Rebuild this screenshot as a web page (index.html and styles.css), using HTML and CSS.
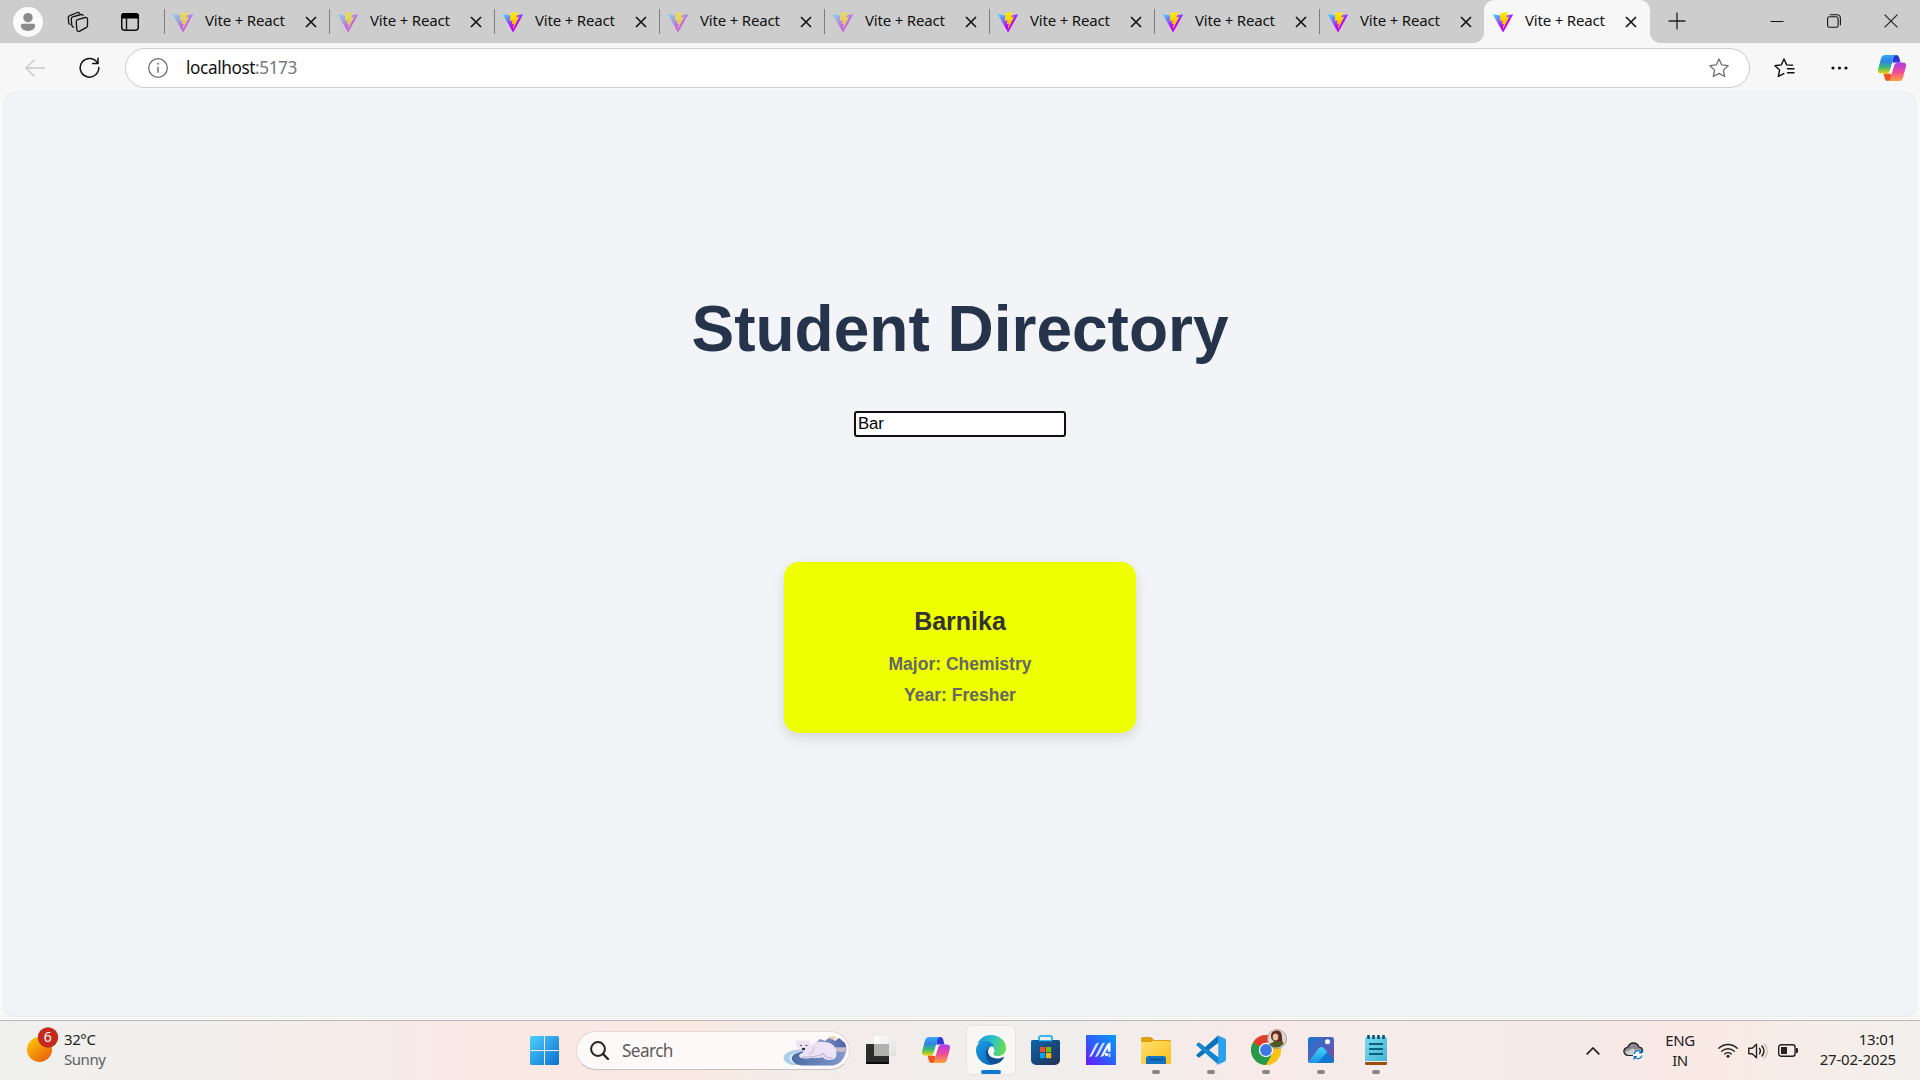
FILE: index.html
```html
<!DOCTYPE html>
<html lang="en">
<head>
<meta charset="utf-8">
<title>Vite + React</title>
<link rel="stylesheet" href="styles.css">
</head>
<body>
<svg class="defs" width="0" height="0" aria-hidden="true">
  <defs>
    <linearGradient id="viteA" x1="-.8%" x2="57.6%" y1="10%" y2="80%"><stop offset="0" stop-color="#41d1ff"/><stop offset=".85" stop-color="#bd00ff"/></linearGradient>
    <linearGradient id="viteB" x1="43.4%" x2="50.3%" y1="2.2%" y2="89%"><stop offset="0" stop-color="#ffea00"/><stop offset=".3" stop-color="#fbdc00"/><stop offset="1" stop-color="#ffb400"/></linearGradient>
    <linearGradient id="copL" x1="0" x2="0" y1="0" y2="1"><stop offset="0" stop-color="#35a8f5"/><stop offset=".35" stop-color="#2f84e8"/><stop offset=".65" stop-color="#35b878"/><stop offset="1" stop-color="#f2d500"/></linearGradient>
    <linearGradient id="copR" x1="0" x2="0" y1="0" y2="1"><stop offset="0" stop-color="#a93cf0"/><stop offset=".5" stop-color="#f2489c"/><stop offset="1" stop-color="#ffa43c"/></linearGradient>
    <linearGradient id="edgeA" x1="0" x2="1" y1=".3" y2=".5"><stop offset="0" stop-color="#1695db"/><stop offset=".5" stop-color="#2fc3c8"/><stop offset="1" stop-color="#6add48"/></linearGradient>
    <linearGradient id="edgeB" x1="0" x2="1" y1="0" y2="1"><stop offset="0" stop-color="#1b9de2"/><stop offset="1" stop-color="#0862b8"/></linearGradient>
    <linearGradient id="winA" gradientUnits="userSpaceOnUse" x1="0" x2="29" y1="0" y2="29"><stop offset="0" stop-color="#4fd0fc"/><stop offset="1" stop-color="#0a6fd0"/></linearGradient>
    <linearGradient id="storeA" x1="0" x2="1" y1="0" y2="1"><stop offset="0" stop-color="#0f63ad"/><stop offset="1" stop-color="#22304f"/></linearGradient>
    <linearGradient id="asusA" x1="0" x2="1" y1="1" y2="0"><stop offset="0" stop-color="#6b16f5"/><stop offset=".5" stop-color="#2a62fb"/><stop offset="1" stop-color="#0a9bff"/></linearGradient>
    <linearGradient id="foldA" x1="0" x2="1" y1="0" y2="1"><stop offset="0" stop-color="#ffdf70"/><stop offset="1" stop-color="#fbbf1c"/></linearGradient>
    <linearGradient id="phoA" x1="0" x2="1" y1="0" y2="1"><stop offset="0" stop-color="#1c75d0"/><stop offset="1" stop-color="#7f4da6"/></linearGradient>
    <linearGradient id="phoB" x1="0" x2="0" y1="0" y2="1"><stop offset="0" stop-color="#45d2fb"/><stop offset="1" stop-color="#1596e8"/></linearGradient>
    <linearGradient id="noteA" x1="0" x2="1" y1="0" y2="1"><stop offset="0" stop-color="#7bdcf0"/><stop offset="1" stop-color="#46b4d2"/></linearGradient>
    <linearGradient id="sunA" x1=".1" x2=".9" y1="0" y2="1"><stop offset="0" stop-color="#fccb09"/><stop offset="1" stop-color="#e8590a"/></linearGradient>
    <linearGradient id="tvA" x1="0" x2="1" y1="0" y2="1"><stop offset="0" stop-color="#ffffff"/><stop offset="1" stop-color="#dedede"/></linearGradient>
    <linearGradient id="skyA" x1="0" x2="1" y1="0" y2="0"><stop offset="0" stop-color="#8fa3d0"/><stop offset="1" stop-color="#4f60a8"/></linearGradient>
    <linearGradient id="waterA" x1="0" x2="1" y1="0" y2="0"><stop offset="0" stop-color="#4a6da3"/><stop offset="1" stop-color="#829ad0"/></linearGradient>
    <symbol id="vite" viewBox="0 0 256 257">
      <path fill="url(#viteA)" d="M255.153 37.938L134.897 252.976c-2.483 4.44-8.862 4.466-11.382.048L.875 37.958c-2.746-4.814 1.371-10.646 6.827-9.67l120.385 21.517a6.537 6.537 0 0 0 2.322-.004l117.867-21.483c5.438-.991 9.574 4.796 6.877 9.62Z"/>
      <path fill="url(#viteB)" d="M185.432.063L96.44 17.501a3.268 3.268 0 0 0-2.634 3.014l-5.474 92.456a3.268 3.268 0 0 0 3.997 3.378l24.777-5.718c2.318-.535 4.413 1.507 3.936 3.838l-7.361 36.047c-.495 2.426 1.782 4.5 4.151 3.78l15.304-4.649c2.372-.72 4.652 1.36 4.15 3.788l-11.698 56.621c-.732 3.542 3.979 5.473 5.943 2.437l1.313-2.028l72.516-144.72c1.215-2.423-.88-5.186-3.54-4.672l-25.505 4.922c-2.396.462-4.435-1.77-3.759-4.114l16.646-57.705c.677-2.35-1.37-4.583-3.769-4.113Z"/>
    </symbol>
    <symbol id="x" viewBox="0 0 12 12"><path d="M1 1l10 10M11 1L1 11" fill="none" stroke="#111" stroke-width="1.6"/></symbol>
    <symbol id="copilot" viewBox="0 0 28 26">
      <path d="M15 0h3.200q2.200 0 2.900 2.300L22.500 7.400h-3q-3.500 0-5 4z" fill="#2f35d2"/>
      <path d="M13 26H9.800q-2.200 0-2.900-2.300L5.500 18.600h3q3.500 0 5-4z" fill="#f0541e"/>
      <path d="M7 0h11.200q-2 .4-2.600 2.600L12 15.400q-1 3.200-3.800 3.200H3.600Q-1 18.600.2 14L3 3.600Q4 0 7 0z" fill="url(#copL)"/>
      <path d="M21 26H9.800q2-.4 2.600-2.600L16 10.600q1-3.200 3.800-3.200h4.600q4.600 0 3.400 4.600L25 22.400Q24 26 21 26z" fill="url(#copR)"/>
      <path d="M18.800 7.400q-2.200.5-2.900 3.300l-2.400 8.200-4.800-.3q2.400-.3 3.300-3.200l1.700-5.800q.7-2.200 2.600-2.200z" fill="#fbf7f6"/>
    </symbol>
  </defs>
</svg>

<div class="browser">
  <header class="titlebar">
    <div class="tools">
      <svg class="avatar" width="30" height="30" viewBox="0 0 30 30"><circle cx="15" cy="15" r="15" fill="#fafafa"/><circle cx="15" cy="10.600" r="4.700" fill="#8c8c8c"/><path d="M9.500 16.800h11a1.700 1.700 0 0 1 1.700 1.700c0 3.400-3.300 5.400-7.200 5.400s-7.200-2-7.200-5.400a1.700 1.700 0 0 1 1.700-1.700z" fill="#8c8c8c"/></svg>
      <svg class="spaces" width="22" height="22" viewBox="0 0 22 22" fill="none" stroke="#111" stroke-width="1.300" stroke-linejoin="round" stroke-linecap="round"><path d="M10.600 8.600l7.700-2.100c1.200-.3 2.200.4 2.200 1.600v6.500c0 .9-.5 1.700-1.400 2l-6.300 3.500c-1.500.7-2.700.1-2.900-1.200l-.7-8c-.1-1.200.4-2 1.400-2.300z"/><path d="M6.700 16.200c-1 .1-1.600-.5-1.800-1.500L4.200 8.200c-.1-1.300.5-2.100 1.600-2.400L14 3.500c1-.2 1.700.1 2.100 1"/><path d="M3 13.400c-.9-.2-1.200-.8-1.300-1.700l-.4-4.900c-.1-1.100.5-1.900 1.500-2.200L10.500 1.500c.9-.2 1.600.1 1.900.8"/></svg>
      <svg class="vtabs" width="18" height="18" viewBox="0 0 18 18"><rect x=".75" y=".75" width="16.500" height="16.500" rx="3" fill="none" stroke="#111" stroke-width="1.500"/><path d="M0 3a3 3 0 0 1 3-3h12a3 3 0 0 1 3 3v2.600H0z" fill="#000"/><path d="M5.500 5v12" stroke="#111" stroke-width="1.400"/></svg>
    </div>
    <nav class="tabs">
      <div class="tab asleep"><svg class="logo"><use href="#vite"/></svg><span>Vite + React</span><svg class="close"><use href="#x"/></svg></div>
      <div class="tab asleep"><svg class="logo"><use href="#vite"/></svg><span>Vite + React</span><svg class="close"><use href="#x"/></svg></div>
      <div class="tab"><svg class="logo"><use href="#vite"/></svg><span>Vite + React</span><svg class="close"><use href="#x"/></svg></div>
      <div class="tab asleep"><svg class="logo"><use href="#vite"/></svg><span>Vite + React</span><svg class="close"><use href="#x"/></svg></div>
      <div class="tab asleep"><svg class="logo"><use href="#vite"/></svg><span>Vite + React</span><svg class="close"><use href="#x"/></svg></div>
      <div class="tab"><svg class="logo"><use href="#vite"/></svg><span>Vite + React</span><svg class="close"><use href="#x"/></svg></div>
      <div class="tab"><svg class="logo"><use href="#vite"/></svg><span>Vite + React</span><svg class="close"><use href="#x"/></svg></div>
      <div class="tab"><svg class="logo"><use href="#vite"/></svg><span>Vite + React</span><svg class="close"><use href="#x"/></svg></div>
      <div class="tab active"><svg class="logo"><use href="#vite"/></svg><span>Vite + React</span><svg class="close"><use href="#x"/></svg></div>
    </nav>
    <svg class="newtab" width="18" height="18" viewBox="0 0 18 18"><path d="M9 .5v17M.5 9h17" stroke="#222" stroke-width="1.300"/></svg>
    <div class="winctl">
      <svg width="14" height="14" viewBox="0 0 14 14"><path d="M.5 7.500h13" stroke="#111"/></svg>
      <svg width="14" height="14" viewBox="0 0 14 14" fill="none" stroke="#111" stroke-width="1.100"><rect x=".6" y="2.800" width="10.500" height="10.500" rx="1.800"/><path d="M2.800 .8h7.600a3 3 0 0 1 3 3v7.400"/></svg>
      <svg width="14" height="14" viewBox="0 0 14 14"><path d="M.6.6l12.800 12.800M13.400.6L.6 13.400" stroke="#222" stroke-width="1.200"/></svg>
    </div>
  </header>

  <div class="toolbar">
    <svg class="back" width="20" height="18" viewBox="0 0 20 18" fill="none" stroke="#cacaca" stroke-width="1.400"><path d="M9.500.5L1 9l8.500 8.500M1 9h19"/></svg>
    <svg class="reload" width="21" height="21" viewBox="0 0 21 21" fill="none" stroke="#111" stroke-width="1.500" stroke-linecap="round"><path d="M18.600 6.200A9.300 9.300 0 1 0 19.800 10.500"/><path d="M19 1.200v5.300h-5.300"/></svg>
    <div class="address">
      <svg class="info" width="20" height="20" viewBox="0 0 20 20"><circle cx="10" cy="10" r="9.300" fill="none" stroke="#707070" stroke-width="1.300"/><path d="M10 8.700v6" stroke="#707070" stroke-width="1.500"/><circle cx="10" cy="5.800" r="1" fill="#707070"/></svg>
      <span class="url">localhost<i>:5173</i></span>
      <svg class="star" width="20" height="20" viewBox="0 0 20 20"><path d="M10 1l2.700 5.900 6.400.8-4.700 4.400 1.300 6.400L10 15.400l-5.700 3.100 1.300-6.400L.9 7.700l6.400-.8z" fill="none" stroke="#707070" stroke-width="1.300" stroke-linejoin="round"/></svg>
    </div>
    <svg class="favs" width="21" height="20" viewBox="0 0 21 20" fill="none" stroke="#111" stroke-width="1.400" stroke-linejoin="round" stroke-linecap="round"><path d="M18.500 7.200l-5.800-.3L10 1 7.300 6.900.9 7.700l4.700 4.400-1.300 6.400 5.500-2.900M13.500 10.700h6.500M13.500 14.800h6.500"/></svg>
    <svg class="dots" width="17" height="4" viewBox="0 0 17 4" fill="#111"><circle cx="2" cy="2" r="1.600"/><circle cx="8.500" cy="2" r="1.600"/><circle cx="15" cy="2" r="1.600"/></svg>
    <svg class="cop" width="28" height="26"><use href="#copilot"/></svg>
  </div>

  <main class="page">
    <h1>Student Directory</h1>
    <input class="filter" type="text" value="Bar" aria-label="Filter">
    <article class="card">
      <h2>Barnika</h2>
      <p>Major: Chemistry</p>
      <p>Year: Fresher</p>
    </article>
  </main>
</div>

<footer class="taskbar">
  <div class="weather">
    <svg width="33" height="36" viewBox="0 0 33 36"><circle cx="13.500" cy="22.500" r="12.500" fill="url(#sunA)"/><circle cx="22" cy="10.500" r="10.200" fill="#c42b1c"/><text class="count" x="21.800" y="15.300" text-anchor="middle">6</text></svg>
    <div class="lines"><b>32°C</b><span>Sunny</span></div>
  </div>

  <div class="apps">
    <div class="slot"><svg width="29" height="29" viewBox="0 0 29 29" fill="url(#winA)"><path d="M0 1.500A1.500 1.500 0 0 1 1.500 0H14v14H0z"/><path d="M15 0h12.500A1.500 1.500 0 0 1 29 1.500V14H15z"/><path d="M0 15h14v14H1.500A1.500 1.500 0 0 1 0 27.500z"/><path d="M15 15h14v12.500a1.500 1.500 0 0 1-1.500 1.500H15z"/></svg></div>
    <div class="search">
      <svg width="19" height="19" viewBox="0 0 19 19" fill="none" stroke="#222" stroke-width="2"><circle cx="8" cy="8" r="6.900"/><path d="M13 13l5 5" stroke-width="2.400" stroke-linecap="round"/></svg>
      <span>Search</span>
      <svg class="bear" width="64" height="32" viewBox="0 0 64 32">
        <path d="M9 30C2 28-.5 24 1 21c2-4.500 10-6.500 20-7l6 16z" fill="#a9cdea"/>
        <path d="M12 29C6 26 4 22.500 9 19c4-2.500 9-3 13-3l5 14z" fill="#d8e9f6"/>
        <path d="M28 12l9-8 5 2 5-4 5 4 4-3 6 5c1.500 3 1.500 6 1 9H30z" fill="url(#skyA)"/>
        <path d="M46 4l2-2.500c3-1 5 .5 6 2l-3 1z" fill="#f3cfa8"/>
        <path d="M9 22c2-4 9-6 20-7l21-3h13c.6 7-3 17-13 18.500H20C12 30 8 26 9 22z" fill="url(#waterA)"/>
        <path d="M50 12.500h13l-.5 4c-5 1-9 0-12.500-2z" fill="#c9b9cb"/>
        <path d="M13.500 9c-2-3 1-4.800 3-3 2.500-1 5-1 7 .2 2-2.300 5-.2 3.400 2.600l.6 2.400c3-4.500 8-4.700 12.500-4.200 8-.5 13 4 13.500 10 .2 4-1 7.500-4.500 7.800-4.500.5-8-.3-9-2.500-5 1.200-9 .5-12 .7-4 .8-8.500.7-11-.6-2-2-.3-3.600 2.600-4.300l.8-2.600c-3.500-.6-6.500-2-6.900-6.500z" fill="#ece4f4"/>
        <path d="M19 22c8 .5 15 .2 21-3.500 1.500 3 5 5 10 4.500M31 12c.5 3-1.500 6-5.500 7" fill="none" stroke="#c3b5d6" stroke-width="1.100"/>
        <circle cx="18" cy="10.500" r=".8" fill="#333"/><circle cx="23.500" cy="10.500" r=".8" fill="#333"/><ellipse cx="20.500" cy="14" rx="1.700" ry="1.200" fill="#2d2838"/>
      </svg>
    </div>
    <div class="slot tv"><svg width="30" height="28" viewBox="0 0 30 28"><rect y="8" width="23" height="20" rx="1" fill="#2c2c2c"/><path d="M0 26h23v1a1 1 0 0 1-1 1H1a1 1 0 0 1-1-1z" fill="#080808"/><rect x="8" width="22" height="20" rx="1" fill="url(#tvA)"/><path d="M8 8h15v12H8z" fill="#b0b0ae"/></svg></div>
    <div class="slot"><svg width="28" height="26"><use href="#copilot"/></svg></div>
    <div class="slot current"><svg width="30" height="30" viewBox="0 0 30 30">
      <path d="M1.600 8.500C4 3.200 9 0 15 0c8.500 0 15 6 15 13.200 0 4.800-3.600 7.800-8.200 7.800-3.800 0-5-1.400-4.300-2.700 1.200-1.700 1.200-3.500.3-5C16 9 9 6 1.600 8.500z" fill="url(#edgeA)"/>
      <path d="M0 15C0 9.500 4.500 6.300 9.500 6.300c4 0 7.300 2.200 8.500 5.200-3-.8-6 1-6 4.800 0 6 4.600 11.300 9.500 11.300C19.500 29 17.500 30 15 30 6.500 30 0 23.300 0 15z" fill="url(#edgeB)"/>
      <path d="M13.300 12.200C10 14 9 17.500 10 21.500c1.300 5 5.500 8 9.500 7.500 3.500-.6 6.600-3 8.300-6 .4-.8-.2-1.200-1-.8-6.800 3.500-15.800-.3-14.800-6.600.3-1.500.8-2.600 1.300-3.400z" fill="#124f93"/></svg><em></em></div>
    <div class="slot store"><svg width="29" height="30" viewBox="0 0 29 30"><path d="M8 6.500V3a2 2 0 0 1 2-2h9a2 2 0 0 1 2 2v3.500" fill="none" stroke="#33b9f2" stroke-width="2"/><path d="M0 6.500A1.500 1.500 0 0 1 1.500 5h26A1.500 1.500 0 0 1 29 6.500V25a5 5 0 0 1-5 5H5a5 5 0 0 1-5-5z" fill="url(#storeA)"/><path d="M8 5h13v1.200H8z" fill="#33b9f2"/><path d="M9 12h5.200v5.200H9z" fill="#f25022"/><path d="M15 12h5.200v5.200H15z" fill="#7fba00"/><path d="M9 18h5.200v5.200H9z" fill="#00a4ef"/><path d="M15 18h5.200v5.200H15z" fill="#ffb900"/></svg></div>
    <div class="slot"><svg width="30" height="30" viewBox="0 0 30 30"><path d="M0 0h30v30H0z" fill="url(#asusA)"/><path d="M3 22L9.500 9.500Q10.600 7.500 13 7.500L6.500 20q-1 2-3.500 2zM9 22l6.500-12.500q1.100-2 3.500-2L12.500 20q-1 2-3.500 2z" fill="#dfe4ff"/><path d="M14.500 22L21 9.500q1.200-2 3.500-2v9.300h-2.700v-4L18.500 19q-1.200 3-4 3z" fill="#fff"/><circle cx="20.500" cy="19.500" r="1.700" fill="#fff"/><path d="M22.500 18.500h2V22h-2z" fill="#c9d4ff"/></svg></div>
    <div class="slot"><svg width="30" height="27" viewBox="0 0 30 27"><path d="M0 1.500A1.500 1.500 0 0 1 1.500 0h7.200c1 0 1.600.3 2.300 1l2 2H28.500A1.500 1.500 0 0 1 30 4.500V10H0z" fill="#dfa010"/><path d="M0 5h9.500c1 0 1.500-.3 2.200-1h16.800A1.500 1.500 0 0 1 30 5.500v20a1.500 1.500 0 0 1-1.500 1.500h-27A1.500 1.500 0 0 1 0 25.500z" fill="url(#foldA)"/><path d="M5 27v-5.500A2.500 2.500 0 0 1 7.500 19h15a2.500 2.500 0 0 1 2.500 2.500V27z" fill="#1273c4"/><path d="M8.500 22.700h13" stroke="#0a4b8c" stroke-width="1.300"/></svg><em></em></div>
    <div class="slot"><svg width="30" height="30" viewBox="0 0 30 30"><path d="M1 19.300L21.800.8 24 6.500 3.600 22.200c-.5.400-1.100.4-1.600 0l-1.200-1.100c-.6-.5-.5-1.300.2-1.800z" fill="#0873b8"/><path d="M1 10.700l20.800 18.500L24 23.500 3.600 7.800c-.5-.4-1.100-.4-1.600 0L.8 8.900c-.6.500-.5 1.300.2 1.800z" fill="#1687cf"/><path d="M21.800 29.800c-.7.200-1.300-.1-1.800-.6.900.8 2.300.2 2.300-1V1.800c0-1.200-1.400-1.800-2.300-1 .5-.5 1.100-.8 1.800-.6L28.800 3.500c.7.400 1.200 1 1.200 1.900v19.200c0 .8-.5 1.500-1.200 1.900z" fill="#2aa0ef"/></svg><em></em></div>
    <div class="slot"><svg class="chrome" width="36" height="36" viewBox="0 0 36 36"><circle cx="15" cy="21" r="15" fill="#fbc116"/><path d="M15 21L2 13.500A15 15 0 0 1 28 13.500H15z" fill="#e33b2e"/><path d="M2 13.500A15 15 0 0 0 15 36l6.500-11.200L15 21z" fill="#259a4a"/><path d="M28 13.500A15 15 0 0 1 15 36l6.500-11.200A7.500 7.500 0 0 0 21.500 17L19 13.500z" fill="#fbc116"/><circle cx="15" cy="21" r="7.200" fill="#fff"/><circle cx="15" cy="21" r="5.900" fill="#3b78e7"/><circle cx="26" cy="10" r="9.500" fill="#ded8ce" stroke="#8c8882" stroke-width=".7"/><path d="M20.500 10C19 5 21 1.500 26 1.500c5 .5 5 5 5 8s1.500 4 0 5l-5 1z" fill="#5e2c22"/><ellipse cx="24.500" cy="8" rx="2.800" ry="3.500" fill="#ecc0a2"/><path d="M18.500 15.500c3-3.500 10-4.500 14.500-1.500a9 9 0 0 1-14.500 1.500z" fill="#4c5c26"/></svg><em></em></div>
    <div class="slot"><svg width="26" height="26" viewBox="0 0 26 26"><rect width="26" height="26" rx="2.500" fill="url(#phoA)"/><path d="M5 26L14 14.500c1.500-1.800 3.500-1.800 5 0l7 8.500v.5a2.500 2.500 0 0 1-2.500 2.500z" fill="#1278cf"/><path d="M.5 25L10.500 11.500c1.600-2 4-2 5.600 0l3.300 3.500L9 26H2.500q-1.300 0-2-1z" fill="url(#phoB)"/><circle cx="19.500" cy="4.800" r="2.500" fill="#fff"/></svg><em></em></div>
    <div class="slot"><svg width="22" height="30" viewBox="0 0 22 30"><path d="M0 26h22v2.500a1.500 1.500 0 0 1-1.500 1.500h-19A1.500 1.500 0 0 1 0 28.500z" fill="#9c4d10"/><path d="M0 25h22v2H0z" fill="#e9eef0"/><path d="M0 3.500A1.500 1.500 0 0 1 1.500 2h19A1.500 1.500 0 0 1 22 3.500V26H0z" fill="url(#noteA)"/><path d="M4 9h14M4 14h14M4 19h14" stroke="#0a6080" stroke-width="1.800"/><path d="M3.500 0v4M8.500 0v4M13.500 0v4M18.500 0v4" stroke="#0a5570" stroke-width="2.600"/></svg><em></em></div>
  </div>

  <div class="tray">
    <svg class="chev" width="14" height="8" viewBox="0 0 14 8"><path d="M.7 7.300L7 1l6.300 6.300" fill="none" stroke="#222" stroke-width="1.700"/></svg>
    <svg class="cloud" width="21" height="18" viewBox="0 0 21 18"><path d="M5 13.300a4 4 0 0 1-.2-8C5.800 2.500 8 1 10.300 1c2.800 0 4.800 1.500 5.700 4.200 2 .2 3.600 1.800 3.600 4 0 2.300-1.700 4.100-4 4.100z" fill="#8a8a8a" stroke="#222" stroke-width="1.300"/><path d="M2 10l8-3.500 3 2-4 4.500H5z" fill="#d0d0d0"/><circle cx="15" cy="12.700" r="5.300" fill="#fff"/><path d="M11 12a4.100 4.100 0 0 1 7.400-1.600M19 13.400a4.100 4.100 0 0 1-7.400 1.600M18.800 8v2.800H16M11.200 17.500v-2.800H14" fill="none" stroke="#0f6cbd" stroke-width="1.300"/></svg>
    <div class="lang"><span>ENG</span><span>IN</span></div>
    <svg class="wifi" width="20" height="15" viewBox="0 0 20 15" fill="none" stroke="#222" stroke-width="1.400" stroke-linecap="round"><path d="M.8 5.300a13 13 0 0 1 18.400 0M3.800 8.300a8.800 8.800 0 0 1 12.400 0M6.800 11a4.700 4.700 0 0 1 6.400 0"/><circle cx="10" cy="13.200" r="1.500" fill="#222" stroke="none"/></svg>
    <svg class="vol" width="20" height="16" viewBox="0 0 20 16" fill="none" stroke="#222" stroke-width="1.400" stroke-linecap="round" stroke-linejoin="round"><path d="M.8 5.300h3.400L8.500 1.300v13.400l-4.300-4H.8zM11.500 5.300c1.200 1.700 1.200 3.700 0 5.400M14 3c2.500 3.200 2.500 6.800 0 10"/><path d="M16.500 1c3.600 4.300 3.600 9.700 0 14" stroke="#c9c1be"/></svg>
    <svg class="batt" width="20" height="13" viewBox="0 0 20 13"><rect x=".7" y=".8" width="16.400" height="11.400" rx="2.500" fill="none" stroke="#222" stroke-width="1.400"/><path d="M3 3h6v7H3z" fill="#222"/><path d="M18 4h.8a1.200 1.200 0 0 1 1.200 1.200v2.600A1.200 1.200 0 0 1 18.800 9H18z" fill="#222"/></svg>
    <div class="clock"><span>13:01</span><span>27-02-2025</span></div>
  </div>
</footer>
</body>
</html>
```

FILE: styles.css
```css
* { box-sizing: border-box; }

body {
  margin: 0;
  width: 1920px;
  height: 1080px;
  display: flex;
  flex-direction: column;
  overflow: hidden;
  background: #f7f7f7;
  font-family: "Noto Sans", "Open Sans", sans-serif;
  color: #111;
}

svg { display: block; flex: none; }
.defs { position: absolute; }

.browser {
  height: 1020px;
  display: flex;
  flex-direction: column;
}

/* Title bar with tabs */
.titlebar {
  height: 43px;
  flex: none;
  display: flex;
  background: #cdcdcd;
}
.tools {
  width: 164px;
  display: flex;
  align-items: center;
  padding-left: 13px;
}
.spaces { margin-left: 24px; }
.vtabs { margin-left: 32px; }

.tabs { display: flex; }
.tab {
  width: 165px;
  height: 43px;
  display: flex;
  align-items: center;
  padding-left: 8px;
  font-size: 15px;
  letter-spacing: -.18px;
  line-height: 20px;
  background: linear-gradient(#7d7d7d, #7d7d7d) 0 9px / 1px 25px no-repeat;
}
.tab span {
  width: 100px;
  margin-left: 12px;
  padding-bottom: 3px;
  white-space: nowrap;
}
.logo { width: 20px; height: 20px; margin-left: 1px; }
.asleep .logo { opacity: .5; }
.close { width: 12px; height: 12px; }
.active {
  position: relative;
  width: 166px;
  background: #f7f7f7;
  border-radius: 10px 10px 0 0;
}
.active::before,
.active::after {
  content: "";
  position: absolute;
  bottom: 0;
  width: 10px;
  height: 10px;
}
.active::before {
  left: -10px;
  background: radial-gradient(circle at 0 0, #cdcdcd 9.5px, #f7f7f7 10px);
}
.active::after {
  right: -10px;
  background: radial-gradient(circle at 100% 0, #cdcdcd 9.5px, #f7f7f7 10px);
}
.newtab { margin: 12px 0 0 18px; }
.winctl {
  display: flex;
  gap: 43px;
  margin: 14px 0 0 auto;
  padding-right: 22px;
}

/* Toolbar */
.toolbar {
  height: 49px;
  flex: none;
  display: flex;
  align-items: center;
  padding-left: 25px;
}
.reload { margin-left: 34px; }
.address {
  width: 1625px;
  height: 40px;
  display: flex;
  align-items: center;
  margin-left: 25px;
  padding: 0 20px 0 22px;
  background: #fff;
  border: 1px solid #cbcbcb;
  border-radius: 20px;
}
.url {
  margin-left: 18px;
  font-size: 17.2px;
  letter-spacing: -.4px;
  line-height: 24px;
}
.url i { font-style: normal; color: #767676; }
.star { margin-left: auto; }
.favs { margin-left: 24px; }
.dots { margin-left: 36px; }
.cop { margin-left: 30px; }

/* Page content */
.page {
  height: 923px;
  margin: 1px 5px 0;
  display: flex;
  flex-direction: column;
  align-items: center;
  background: #f3f4f8;
  border-radius: 10px;
  box-shadow: 0 0 2px #c9cccc;
  font-family: "Liberation Sans", Arial, sans-serif;
}
h1 {
  margin: 201px 0 0;
  font-size: 64px;
  line-height: 70px;
  color: #25334b;
}
.filter {
  width: 212px;
  height: 26px;
  margin-top: 47px;
  padding: 0 3px 0 2px;
  border: 2px solid #101010;
  border-radius: 3px;
  outline: none;
  background: #fff;
  color: #000;
  font: 16.667px/20px "Liberation Sans", Arial, sans-serif;
}
.card {
  width: 352px;
  height: 171px;
  margin-top: 125px;
  padding-top: 45px;
  border-radius: 15px;
  background: #eeff00;
  box-shadow: 0 5px 13px rgba(0, 0, 0, .12);
  text-align: center;
}
.card h2 {
  margin: 0 0 19px;
  font-size: 25px;
  line-height: 28px;
  color: #333;
}
.card p {
  margin: 0 0 11px;
  font-size: 17.5px;
  font-weight: bold;
  line-height: 20px;
  color: #666;
}

/* Taskbar */
.taskbar {
  height: 60px;
  display: grid;
  grid-template-columns: 520px 880px 1fr;
  border-top: 1px solid #b9b9b9;
  background: linear-gradient(90deg, #f0f0ef 0, #f1efed 200px, #f8eae6 420px, #f9e8e4 560px, #f8eae3 700px, #f2edea 850px, #f0eeed 1080px, #f8eae8 1250px, #f5ecea 1420px, #f5eae8 1560px, #f9e9e4 1700px, #f5eee9 1850px, #f2f0ed 1920px);
}
.weather { display: flex; padding: 6px 0 0 26px; }
.count { font-size: 14px; fill: #fff; }
.lines, .lang, .clock {
  display: flex;
  flex-direction: column;
  font-size: 15px;
  letter-spacing: -.2px;
  line-height: 20px;
  color: #222;
}
.lines { margin: 2px 0 0 5px; }
.lines b { font-weight: normal; letter-spacing: -.4px; }
.lines span { color: #606060; letter-spacing: -.45px; }

.apps { display: flex; gap: 7px; padding-top: 5px; }
.slot {
  position: relative;
  width: 48px;
  height: 48px;
  display: flex;
  align-items: center;
  justify-content: center;
  border-radius: 5px;
}
.store { padding-right: 1px; }
.current { background: #f9f7f6; box-shadow: 0 0 0 1px #e9e5e3; }
.slot em {
  position: absolute;
  bottom: 0;
  left: 20px;
  width: 8px;
  height: 4px;
  border-radius: 2px;
  background: #8a8684;
}
.current em { left: 14px; width: 20px; background: #0f78d4; }
.chrome { margin: -6px 0 0 6px; }
.search {
  width: 274px;
  height: 39px;
  margin: 5px 0 0 1px;
  display: flex;
  align-items: center;
  padding: 0 2px 0 13px;
  border: 1px solid #e4d9d6;
  border-bottom-color: #c6bfbd;
  border-radius: 20px;
  background: #fdf9f8;
  font-size: 17.2px;
  letter-spacing: -.6px;
  color: #5d5b5a;
}
.search span { margin: 0 auto 0 13px; padding-bottom: 1px; }

.tray {
  display: flex;
  align-items: center;
  padding: 0 24px 0 186px;
}
.cloud { margin: 0 0 0 23px; }
.lang { width: 40px; margin-left: 16px; padding-bottom: 2px; align-items: center; letter-spacing: -.4px; }
.wifi { margin-left: 18px; }
.vol { margin-left: 10px; }
.batt { margin-left: 10px; }
.clock { margin-left: auto; padding-bottom: 4px; align-items: flex-end; }
```
